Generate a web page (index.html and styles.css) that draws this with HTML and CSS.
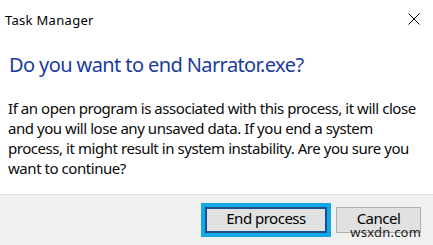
FILE: index.html
```html
<!DOCTYPE html>
<html lang="en">
<head>
<meta charset="utf-8">
<title>Task Manager</title>
<link rel="stylesheet" href="styles.css">
</head>
<body>
<div class="dialog">
  <div class="titlebar">
    <span class="title">Task Manager</span>
    <span class="close" aria-label="Close">
      <svg width="12" height="12" viewBox="0 0 12 12"><path d="M0.5 0.5 L11.5 11.5 M11.5 0.5 L0.5 11.5" stroke="#000" stroke-width="1" fill="none"/></svg>
    </span>
  </div>
  <div class="content">
    <h1 class="heading">Do you want to end Narrator.exe?</h1>
    <p class="message">If an open program is associated with this process, it will close and you will lose any unsaved data. If you end a system process, it might result in system instability. Are you sure you want to continue?</p>
  </div>
  <div class="footer">
    <div class="focus-ring"><button class="btn btn-default">End process</button></div>
    <button class="btn">Cancel</button>
    <span class="watermark">wsxdn.com</span>
  </div>
</div>
</body>
</html>
```

FILE: styles.css
```css
html, body {
  margin: 0;
  padding: 0;
  background: #ffffff;
}
body {
  width: 433px;
  height: 245px;
  overflow: hidden;
  font-family: "Noto Sans", "Open Sans", sans-serif;
  color: #000;
}
.dialog {
  width: 433px;
  height: 245px;
  display: flex;
  flex-direction: column;
}
.titlebar {
  height: 37px;
  display: flex;
  align-items: center;
  justify-content: space-between;
  padding: 0 13px 0 5px;
}
.title {
  font-size: 13px;
  line-height: 16px;
  letter-spacing: 0.3px;
  color: #000;
  padding-top: 3px;
}
.close {
  display: flex;
  width: 12px;
  height: 12px;
  padding-top: 1px;
}
.content {
  flex: 1;
  padding: 0 8px 0 8px;
}
.heading {
  margin: 14px 0 0 1px;
  font-size: 20px;
  line-height: 27px;
  letter-spacing: -0.6px;
  font-weight: normal;
  color: #1a3b9d;
}
.message {
  margin: 20px 0 0 0;
  font-size: 15px;
  line-height: 20px;
  letter-spacing: -0.45px;
  width: 418px;
  color: #0a0a0a;
}
.footer {
  position: relative;
  height: 49px;
  border-top: 1px solid #dfdfdf;
  background: #f0f0f0;
  display: flex;
  align-items: center;
  justify-content: flex-end;
  gap: 5px;
  padding: 0 12px 1px 0;
}
.focus-ring {
  border: 4px solid #12a7e6;
  display: flex;
}
.btn {
  font-family: "Noto Sans", "Open Sans", sans-serif;
  font-size: 15px;
  line-height: 16px;
  letter-spacing: -0.5px;
  color: #000;
  background: #e1e1e1;
  border: 1px solid #adadad;
  height: 26px;
  width: 85px;
  padding: 0 0 3px 0;
  margin: 0;
}
.btn-default {
  width: 122px;
  border: 2px solid #1b4f8f;
}
.watermark {
  position: absolute;
  right: 12px;
  bottom: 6px;
  font-size: 13px;
  line-height: 13px;
  color: #222;
  letter-spacing: 0.2px;
}
```
